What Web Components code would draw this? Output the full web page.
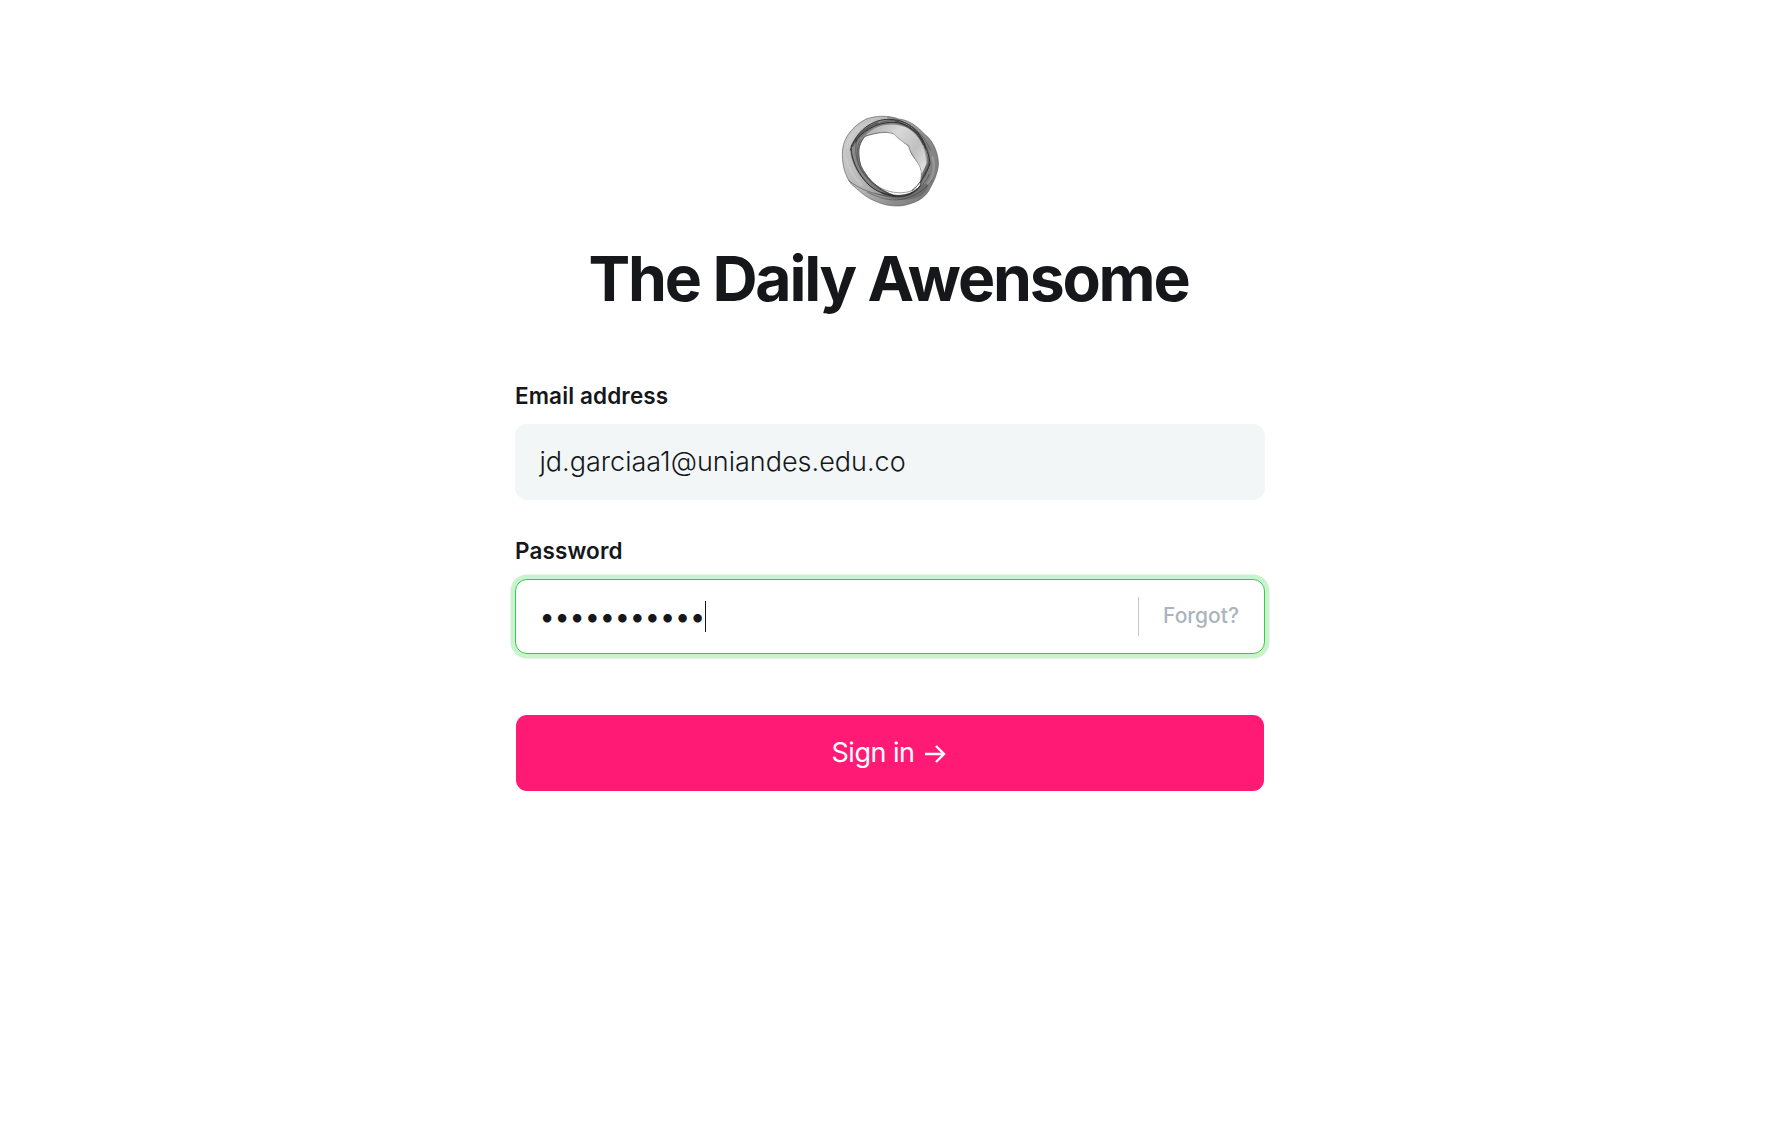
<!DOCTYPE html>
<html lang="en">
<head>
<meta charset="utf-8">
<title>The Daily Awensome</title>
<style>
body{margin:0;background:#fff;font-family:Inter,"Liberation Sans",sans-serif;color:#15171a}
</style>
</head>
<body>
<sign-in-page></sign-in-page>
<script>
function define(name, html) {
  const t = document.createElement('template');
  t.innerHTML = html;
  customElements.define(name, class extends HTMLElement {
    constructor() {
      super();
      this.attachShadow({mode: 'open'}).append(t.content.cloneNode(true));
    }
  });
}

define('site-logo', `
<style>:host{display:block;width:120px;height:110px}svg{display:block}</style>
<svg width="120" height="110" viewBox="0 0 360 330" fill="none">
  <defs>
    <linearGradient id="band" x1="40" y1="100" x2="325" y2="230" gradientUnits="userSpaceOnUse">
      <stop offset="0" stop-color="#cbcbcb"/><stop offset=".35" stop-color="#b6b6b6"/><stop offset=".7" stop-color="#8c8c8c"/><stop offset="1" stop-color="#7c7c7c"/>
    </linearGradient>
    <linearGradient id="veil" x1="120" y1="60" x2="285" y2="180" gradientUnits="userSpaceOnUse">
      <stop offset="0" stop-color="#b0b0b0"/><stop offset=".4" stop-color="#d8d8d8"/><stop offset=".75" stop-color="#c0c0c0"/><stop offset="1" stop-color="#ddd"/>
    </linearGradient>
  </defs>
  <path fill="url(#band)" fill-rule="evenodd" stroke="#606060" stroke-width="2" d="M38 132C42 96 70 62 107 43C132 32 178 30 206 42C235 45 261 62 284 88C311 107 328 151 325 184C321 207 314 226 301 248C287 282 252 295 218 302C187 305 161 300 135 288C105 276 86 256 64 237C45 213 34 176 38 132ZM105 94C90 111 84 132 87 152C88 175 94 189 106 205C122 232 157 259 190 270C221 275 255 265 270 242C274 218 276 201 272 185C258 164 241 148 237 125C222 112 208 104 192 86C163 77 128 87 105 94Z"/>
  <path fill="url(#veil)" d="M104 91C134 50 204 51 240 74C274 91 294 144 292 173L275 207C273 179 244 155 236 124C223 111 208 111 191 87C165 76 136 85 104 91Z"/>
  <path fill="#505050" opacity=".5" d="M61 138C70 92 110 52 165 43C205 42 245 65 270 92C235 63 205 54 165 60C132 66 117 80 105 94C90 111 84 132 87 152C88 175 94 189 106 205C123 234 157 259 190 270C222 273 255 263 270 242C255 274 215 283 180 274C130 261 102 233 81 199C70 178 62 159 61 138Z"/>
  <path fill="#4a4a4a" opacity=".35" d="M236 65C267 77 286 119 300 177C293 207 281 222 271 242C274 223 276 207 288 177C289 130 268 88 236 65ZM130 262C165 274 230 280 270 245C305 218 300 253 272 273C227 293 175 286 130 262Z"/>
  <g stroke="#222" stroke-width="3" opacity=".85">
    <path d="M61 136C76 80 126 41 180 43C225 45 255 66 275 99C289 127 299 155 300 177C288 207 270 238 245 257"/>
    <path d="M63 130C65 165 82 199 101 222C123 253 158 269 200 274C230 276 255 264 271 242"/>
    <path d="M76 112C90 80 140 53 185 52C236 52 272 83 287 133"/>
  </g>
  <g stroke="#333" stroke-width="2" opacity=".7">
    <path d="M67 126C97 82 153 34 212 50C252 60 283 92 302 137"/>
    <path d="M80 107C71 154 84 187 117 223C155 262 215 276 262 250"/>
    <path d="M91 104C76 132 78 177 100 205C129 242 160 263 195 274"/>
    <path d="M55 226C90 253 130 270 190 275C240 281 287 238 298 207"/>
    <path d="M172 38C211 40 253 63 272 94C291 122 303 148 295 181C287 204 276 215 271 241"/>
    <path d="M105 94C90 111 84 132 87 152C88 175 94 189 106 205C122 232 157 259 190 270C221 275 255 265 270 242"/>
    <path d="M112 262C151 279 178 289 213 283C255 277 290 249 307 224"/>
    <path d="M105 94C128 85 165 75 192 87C208 104 223 112 236 122C240 150 265 163 274 199" opacity=".6"/>
  </g>
  <path d="M63 126C82 91 106 66 144 53M155 264C174 270 185 270 198 274M195 47C237 61 265 85 281 120" stroke="#252525" stroke-width="5" opacity=".5"/>
  <path d="M49 131C56 93 89 62 126 51M48 158C57 199 73 216 96 242M307 154C318 188 308 219 292 239" stroke="#e0e0e0" stroke-width="7" opacity=".25"/>
</svg>`);

define('form-field', `
<style>
:host{display:flex;flex-direction:column}
.label{font-size:22.5px;line-height:28px;font-weight:600;letter-spacing:.12px;height:28px;margin-bottom:14px;white-space:nowrap}
.box{box-sizing:border-box;height:76px;width:750px;display:flex;align-items:center;border-radius:12px;background:#f2f6f7;border:1px solid #f2f6f7;padding:0 25px 2px 23.5px;font-size:27px;font-weight:300}
:host([focused]) .box{height:75px;background:#fff;border-color:#30cf43;box-shadow:0 0 0 4.5px #caf2cf;padding-bottom:1px}
.value{display:flex;align-items:center;flex:1}
</style>
<div class="label"><slot name="label"></slot></div>
<div class="box"><div class="value"><slot></slot></div><slot name="action"></slot></div>`);

define('masked-value', `
<style>
:host{display:flex;align-items:center}
.dots{font-size:27px;font-weight:400;line-height:30px;letter-spacing:-.14px;padding-top:2px;white-space:nowrap}
.caret{width:1px;height:31px;background:#15171a}
</style>
<span class="dots">•••••••••••</span><span class="caret"></span>`);

define('forgot-link', `
<style>
:host{display:flex;align-items:center;height:39px;border-left:1px solid #c4c7ca;padding-left:24px;font-size:21px;font-weight:500;color:#abb4be}
span{padding-bottom:1px}
</style>
<span><slot></slot></span>`);

define('primary-button', `
<style>
:host{display:flex;align-items:center;justify-content:center;gap:11px;box-sizing:border-box;width:748px;height:76px;padding:0 2px 2px 0;border-radius:11px;background:#ff1a75;color:#fff;font-size:27px;font-weight:400;letter-spacing:-.5px}
svg{display:block;margin-top:3px}
</style>
<span><slot></slot></span>
<svg width="21" height="18" viewBox="0 0 21 18" fill="none" stroke="#fff" stroke-width="2.4"><path d="M0 9H19M11 1L19 9L11 17"/></svg>`);

define('sign-in-page', `
<style>
:host{display:flex;flex-direction:column;align-items:center;box-sizing:border-box;width:1779px;height:1131px;padding-top:105px}
h1{margin:23px 2px 0 0;font-size:62.5px;line-height:80px;font-weight:700;letter-spacing:-2.2px;white-space:nowrap}
.form{display:flex;flex-direction:column;align-items:center;width:750px;margin:64px 0 0 1px}
.second{margin-top:37px}
primary-button{margin-top:61px}
</style>
<site-logo></site-logo>
<h1>The Daily Awensome</h1>
<div class="form">
  <form-field><span slot="label">Email address</span>jd.garciaa1@uniandes.edu.co</form-field>
  <form-field class="second" focused><span slot="label">Password</span><masked-value></masked-value><forgot-link slot="action">Forgot?</forgot-link></form-field>
  <primary-button>Sign in</primary-button>
</div>`);
</script>
</body>
</html>
